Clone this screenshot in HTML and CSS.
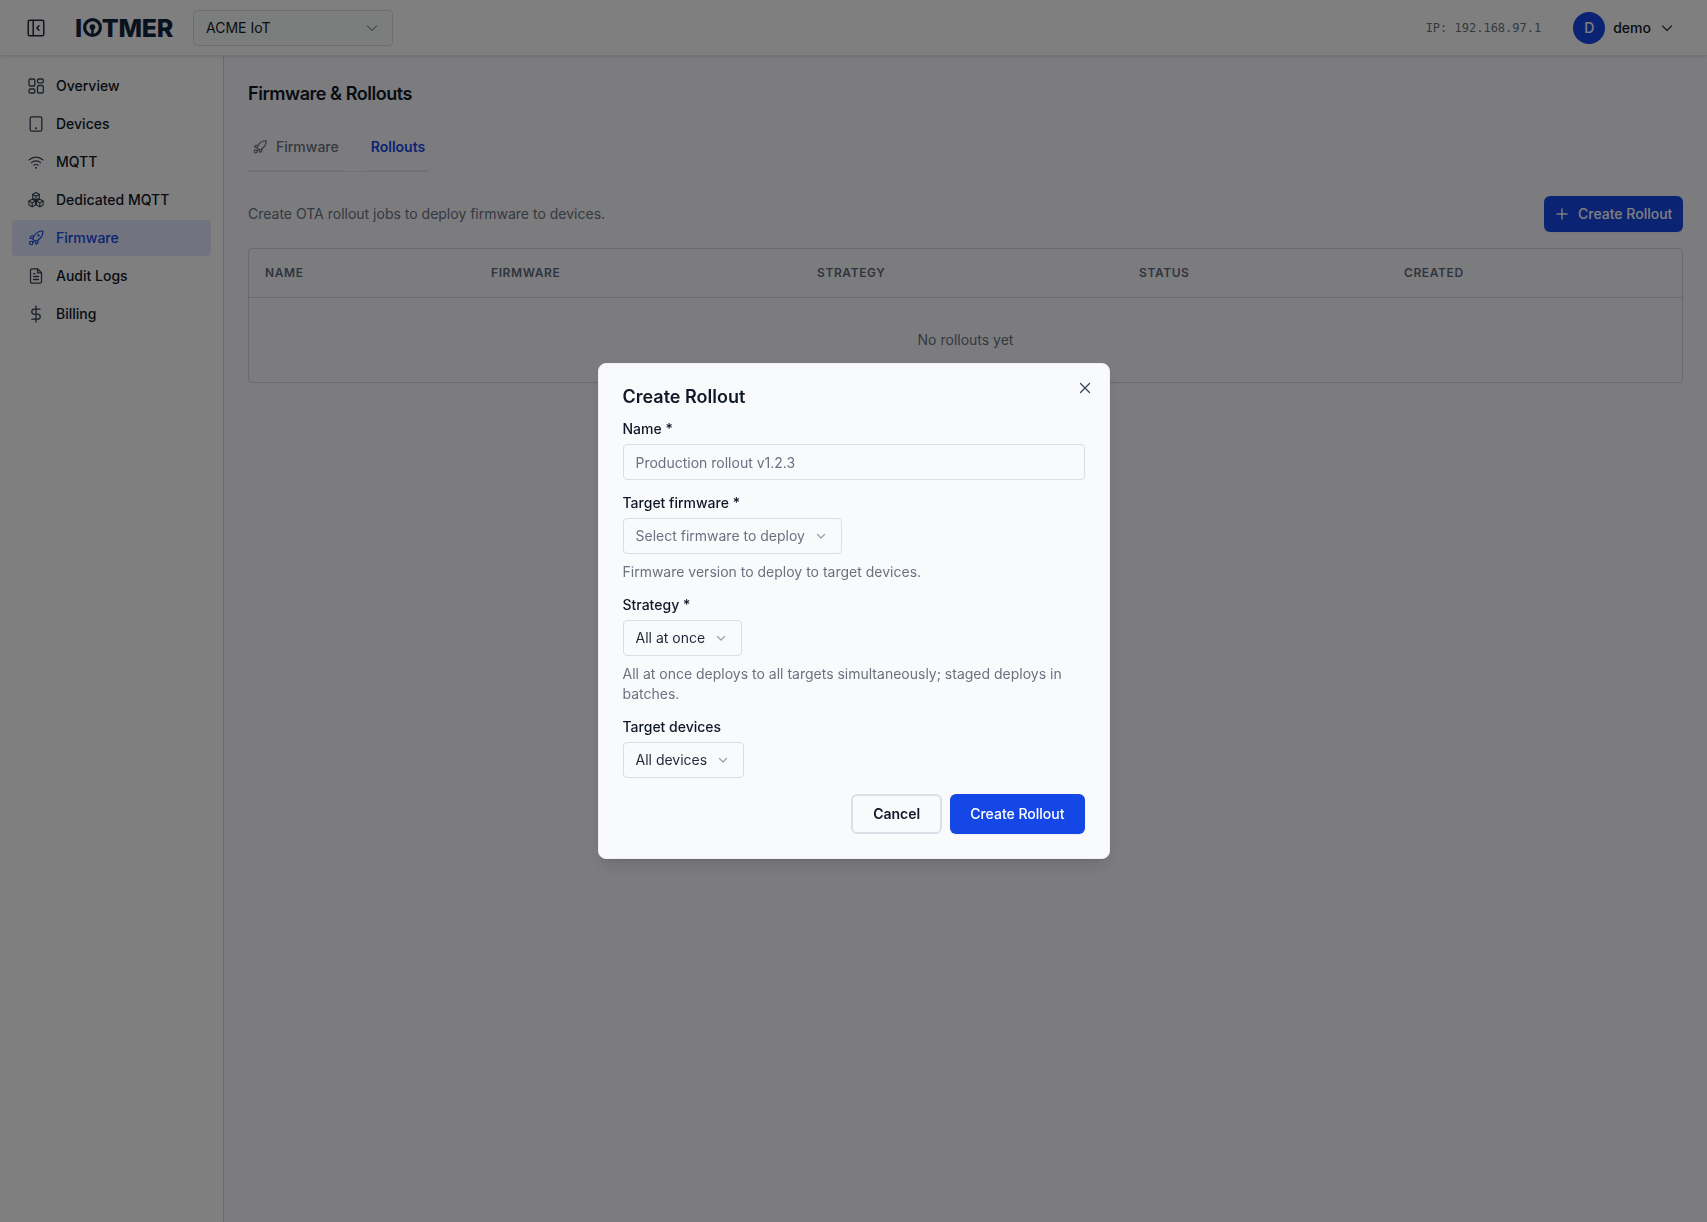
FILE: index.html
```html
<!DOCTYPE html>
<html lang="en">
<head>
<meta charset="utf-8">
<title>Firmware &amp; Rollouts</title>
<link rel="stylesheet" href="styles.css">
</head>
<body>
<div class="app">
  <header class="topbar">
    <div class="topbar-left">
      <button class="icon-btn" aria-label="Toggle sidebar">
        <svg class="ico18" viewBox="0 0 18 18" fill="none" stroke="currentColor" stroke-width="1.5" stroke-linecap="round" stroke-linejoin="round"><rect x="1.2" y="1.2" width="15.6" height="15.6" rx="1.6"/><path d="M6.2 1.2v15.600M12 6.800 9.900 9l2.100 2.200"/></svg>
      </button>
      <div class="logo"><span>I</span><svg class="logo-o" viewBox="0 0 20 20"><path fill-rule="evenodd" d="M10 0a10 10 0 1 0 0 20 10 10 0 0 0 0-20zm0 3.400a6.600 6.600 0 1 1 0 13.200 6.600 6.600 0 0 1 0-13.200z"/><circle cx="10" cy="9.500" r="3"/><rect x="8.700" y="9.500" width="2.600" height="8"/></svg><span>TMER</span></div>
      <div class="org-select"><span>ACME IoT</span><svg class="chev chev-muted" viewBox="0 0 16 16"><path d="M3.500 6l4.500 4.500L12.500 6"/></svg></div>
    </div>
    <div class="topbar-right">
      <span class="ip">IP: 192.168.97.1</span>
      <div class="user">
        <span class="avatar">D</span>
        <span class="user-name">demo</span>
        <svg class="chev chev-dark" viewBox="0 0 16 16"><path d="M3.500 6l4.500 4.500L12.500 6"/></svg>
      </div>
    </div>
  </header>

  <div class="body-row">
    <nav class="sidebar">
      <a class="nav-item">
        <svg class="nav-ico" viewBox="0 0 18 18"><rect x="2" y="2" width="5.800" height="7" rx="1.200"/><rect x="10.500" y="2" width="5.800" height="3.800" rx="1.200"/><rect x="2" y="12" width="5.800" height="4" rx="1.200"/><rect x="10.500" y="8.500" width="5.800" height="7.500" rx="1.200"/></svg>
        <span>Overview</span>
      </a>
      <a class="nav-item">
        <svg class="nav-ico" viewBox="0 0 18 18"><rect x="3.200" y="1.800" width="11.600" height="14.400" rx="1.500"/><circle cx="9" cy="13.300" r=".4"/></svg>
        <span>Devices</span>
      </a>
      <a class="nav-item">
        <svg class="nav-ico thin" viewBox="0 0 18 18"><path d="M2 7c4-3.800 10-3.800 14 0M4.400 9.700c2.600-2.500 6.600-2.500 9.200 0M6.700 12.300c1.300-1.200 3.300-1.200 4.600 0"/><circle cx="9" cy="14.700" r=".4"/></svg>
        <span>MQTT</span>
      </a>
      <a class="nav-item">
        <svg class="nav-ico thin" viewBox="0 0 18 18"><path d="M9 1.500l3.300 1.900v3.800L9 9.100 5.700 7.200V3.400zM5.200 8.200l3.300 1.900v3.800l-3.300 1.900-3.300-1.900v-3.800zM12.800 8.200l3.300 1.900v3.800l-3.300 1.900-3.300-1.900v-3.800z"/><path d="M5.700 3.400 9 5.300l3.300-1.900M9 5.300v3.800M1.900 10.100l3.300 1.900 3.300-1.900M5.200 12v3.800M9.500 10.100l3.300 1.900 3.300-1.900M12.800 12v3.800"/></svg>
        <span>Dedicated MQTT</span>
      </a>
      <a class="nav-item active">
        <svg class="nav-ico thin" viewBox="0 0 18 18"><path d="M16 2c-4.300 0-7.300 2-9.200 5.300L5.700 10l2.300 2.300 2.700-1.100C14 9.300 16 6.300 16 2z"/><path d="M7 7H4.200L2.800 9l3 .7M11 11v2.800l-2 1.400-.7-3"/><circle cx="4.200" cy="14" r="1.700"/><path d="M6.800 12.500l-1.300 1"/><circle cx="11.500" cy="6.500" r=".6"/></svg>
        <span>Firmware</span>
      </a>
      <a class="nav-item">
        <svg class="nav-ico" viewBox="0 0 18 18"><path d="M10.500 1.800H5a1.500 1.500 0 0 0-1.500 1.500v11.400A1.500 1.500 0 0 0 5 16.200h8a1.500 1.500 0 0 0 1.500-1.500V5.800zM10.500 1.800v4h4M6.500 9.500h5M6.500 12.500h5M6.500 6.700h1.500"/></svg>
        <span>Audit Logs</span>
      </a>
      <a class="nav-item">
        <svg class="nav-ico" viewBox="0 0 18 18"><path d="M9 1v16M13 4.200H7.300a2.500 2.500 0 0 0 0 5h3.400a2.500 2.500 0 0 1 0 5H4.800"/></svg>
        <span>Billing</span>
      </a>
    </nav>

    <main class="content">
      <h1 class="page-title">Firmware &amp; Rollouts</h1>
      <div class="tabs">
        <div class="tab">
          <svg class="tab-ico" viewBox="0 0 18 18"><path d="M16 2c-4.300 0-7.300 2-9.200 5.300L5.700 10l2.300 2.300 2.700-1.100C14 9.300 16 6.300 16 2z"/><path d="M7 7H4.200L2.800 9l3 .7M11 11v2.800l-2 1.400-.7-3"/><circle cx="4.200" cy="14" r="1.700"/><path d="M6.800 12.500l-1.300 1"/></svg>
          <span>Firmware</span>
        </div>
        <div class="tab tab-active"><span>Rollouts</span></div>
      </div>
      <div class="toolbar">
        <p class="lead">Create OTA rollout jobs to deploy firmware to devices.</p>
        <button class="btn-add">
          <svg class="plus" viewBox="0 0 16 16"><path d="M8 3v10M3 8h10"/></svg>
          <span>Create Rollout</span>
        </button>
      </div>
      <div class="table-wrap">
        <table class="table">
          <thead>
            <tr>
              <th class="col-name">NAME</th>
              <th class="col-firmware">FIRMWARE</th>
              <th class="col-strategy">STRATEGY</th>
              <th class="col-status">STATUS</th>
              <th>CREATED</th>
            </tr>
          </thead>
          <tbody>
            <tr><td class="empty" colspan="5">No rollouts yet</td></tr>
          </tbody>
        </table>
      </div>
    </main>
  </div>
</div>

<div class="backdrop">
  <div class="modal" role="dialog">
    <button class="close" aria-label="Close">
      <svg viewBox="0 0 12 12"><path d="M1.500 1.500l9 9M10.500 1.500l-9 9"/></svg>
    </button>
    <h2 class="modal-title">Create Rollout</h2>
    <div class="field">
      <label class="label">Name *</label>
      <div class="input placeholder">Production rollout v1.2.3</div>
    </div>
    <div class="field">
      <label class="label">Target firmware *</label>
      <div class="select placeholder"><span>Select firmware to deploy</span><svg class="chev chev-muted" viewBox="0 0 16 16"><path d="M4.500 6.500 8 10l3.500-3.500"/></svg></div>
      <p class="help">Firmware version to deploy to target devices.</p>
    </div>
    <div class="field">
      <label class="label">Strategy *</label>
      <div class="select"><span>All at once</span><svg class="chev chev-muted" viewBox="0 0 16 16"><path d="M4.500 6.500 8 10l3.500-3.500"/></svg></div>
      <p class="help">All at once deploys to all targets simultaneously; staged deploys in batches.</p>
    </div>
    <div class="field">
      <label class="label">Target devices</label>
      <div class="select"><span>All devices</span><svg class="chev chev-muted" viewBox="0 0 16 16"><path d="M4.500 6.500 8 10l3.500-3.500"/></svg></div>
    </div>
    <div class="actions">
      <button class="btn btn-cancel">Cancel</button>
      <button class="btn btn-primary">Create Rollout</button>
    </div>
  </div>
</div>
</body>
</html>
```
FILE: styles.css
```css
* { box-sizing: border-box; }
html, body { margin: 0; height: 100%; }
body {
  font-family: Inter, "Noto Sans", sans-serif;
  font-size: 14px;
  line-height: 20px;
  color: #101828;
  background: #f8f9fc;
  overflow: hidden;
}
button { font: inherit; cursor: pointer; }

.app { display: flex; flex-direction: column; height: 1222px; }

.topbar {
  height: 56px;
  flex: none;
  display: flex;
  align-items: center;
  justify-content: space-between;
  background: #fff;
  border-bottom: 1px solid #e5e7eb;
  box-shadow: 0 1px 3px rgba(0, 0, 0, .1);
  padding: 0 32px 0 27px;
  position: relative;
}
.topbar-left { display: flex; align-items: center; }
.icon-btn {
  border: 0;
  padding: 0;
  background: none;
  color: #1e2939;
  display: flex;
  margin-right: 30px;
}
.ico18 { width: 18px; height: 18px; }

.logo {
  display: flex;
  align-items: center;
  width: 118px;
  font-size: 25px;
  line-height: 28px;
  font-weight: 800;
  letter-spacing: -.3px;
  color: #10243c;
}
.logo-o { width: 19px; height: 19px; margin: 0 0 0 1px; fill: #10243c; flex: none; }

.org-select {
  width: 200px;
  height: 36px;
  display: flex;
  align-items: center;
  justify-content: space-between;
  padding: 0 12px;
  background: #f9fafb;
  border: 1px solid #d8dbe4;
  border-radius: 4px;
  color: #101828;
}
.chev { width: 16px; height: 16px; fill: none; stroke-width: 1.3; stroke-linecap: round; stroke-linejoin: round; flex: none; }
.chev-muted { stroke: #99a1af; }
.chev-dark { stroke: #364153; }

.topbar-right { display: flex; align-items: center; gap: 32px; }
.ip { font-family: "DejaVu Sans Mono", monospace; font-size: 12px; color: #6a7282; }
.user { display: flex; align-items: center; gap: 8px; }
.avatar {
  width: 32px;
  height: 32px;
  border-radius: 50%;
  background: #1447e6;
  color: #fff;
  font-weight: 500;
  display: flex;
  align-items: center;
  justify-content: center;
}
.user-name { font-weight: 500; }

.body-row { flex: 1; display: flex; min-height: 0; }

.sidebar {
  width: 224px;
  flex: none;
  background: #fff;
  border-right: 1px solid #d1d5dc;
  padding: 12px 12px;
  display: flex;
  flex-direction: column;
  gap: 2px;
}
.nav-item {
  height: 36px;
  display: flex;
  align-items: center;
  gap: 11px;
  padding: 0 13px 0 15px;
  border-radius: 4px;
  color: #101828;
  font-weight: 500;
}
.nav-ico {
  width: 18px;
  height: 18px;
  fill: none;
  stroke: #364153;
  stroke-width: 1.3;
  stroke-linecap: round;
  stroke-linejoin: round;
  flex: none;
}
.nav-ico.thin { stroke-width: 1.1; }
.nav-item.active { background: #e2e9fe; color: #1447e6; }
.nav-item.active .nav-ico { stroke: #1447e6; }

.content { flex: 1; min-width: 0; padding: 24px; }
.page-title { margin: 0; font-size: 18px; line-height: 28px; font-weight: 600; letter-spacing: -.45px; color: #101828; }

.tabs {
  display: flex;
  width: fit-content;
  gap: 24px;
  margin-top: 20px;
  border-bottom: 1px solid #e5e7eb;
}
.tab {
  height: 44px;
  margin-bottom: -1px;
  padding: 0 5px 5px 4px;
  display: flex;
  align-items: center;
  gap: 8px;
  color: #6a7282;
  font-weight: 500;
  border-bottom: 2px solid #e5e7eb;
}
.tab-active { color: #1447e6; font-weight: 600; padding-left: 4px; padding-right: 4px; margin-left: -1px; }
.tab-ico {
  width: 16px;
  height: 16px;
  fill: none;
  stroke: #6a7282;
  stroke-width: 1.3;
  stroke-linecap: round;
  stroke-linejoin: round;
}

.toolbar {
  display: flex;
  align-items: center;
  justify-content: space-between;
  margin-top: 24px;
}
.lead { margin: 0; color: #6a7282; }
.btn-add {
  height: 36px;
  width: 139px;
  border: 0;
  border-radius: 6px;
  background: #1447e6;
  color: #fff;
  font-weight: 500;
  display: flex;
  align-items: center;
  gap: 8px;
  padding: 0 0 0 10px;
  box-shadow: 0 1px 2px rgba(0, 0, 0, .05);
}
.plus { width: 16px; height: 16px; fill: none; stroke: #fff; stroke-width: 1.4; stroke-linecap: round; }

.table-wrap {
  margin-top: 16px;
  border: 1px solid #d1d5dc;
  border-radius: 4px;
  overflow: hidden;
  background: #f8f9fc;
}
.table { width: 100%; border-collapse: collapse; table-layout: fixed; }
.table th {
  height: 48px;
  padding: 0 16px;
  text-align: left;
  font-size: 12px;
  line-height: 16px;
  font-weight: 600;
  letter-spacing: .6px;
  color: #5f6b7c;
  border-bottom: 1px solid #d1d5dc;
}
.col-name { width: 226px; }
.col-firmware { width: 326px; }
.col-strategy { width: 322px; }
.col-status { width: 265px; }
.empty { height: 85px; text-align: center; color: #6a7282; padding: 0; }

.backdrop {
  position: fixed;
  inset: 0;
  background: rgba(0, 0, 0, .5);
  display: flex;
  align-items: center;
  justify-content: center;
}
.modal {
  position: relative;
  width: 512px;
  background: #f9fafb;
  border: 1px solid #eef0f4;
  border-radius: 8px;
  padding: 19px 24px 24px;
  box-shadow: 0 10px 15px -3px rgba(0, 0, 0, .1), 0 4px 6px -4px rgba(0, 0, 0, .1);
}
.close {
  position: absolute;
  top: 16px;
  right: 16px;
  width: 16px;
  height: 16px;
  padding: 2px;
  border: 0;
  background: none;
  display: flex;
}
.close svg { width: 12px; height: 12px; fill: none; stroke: #364153; stroke-width: 1.2; stroke-linecap: round; }
.modal-title { margin: 0 0 7px; font-size: 18px; line-height: 28px; font-weight: 600; color: #101828; }
.field { margin-top: 12px; display: flex; flex-direction: column; align-items: flex-start; }
.modal-title + .field { margin-top: 0; }
.label { line-height: 22px; font-weight: 500; color: #101828; margin-bottom: 4px; }
.input, .select {
  height: 36px;
  display: flex;
  align-items: center;
  padding: 0 12px;
  background: #f9fafb;
  border: 1px solid #dadde6;
  border-radius: 4px;
  color: #1e2939;
}
.input { width: 100%; padding-top: 2px; }
.select { gap: 8px; padding-right: 12px; }
.placeholder { color: #6a7282; }
.help { margin: 8px 0 0; color: #6a7282; }
.actions { display: flex; justify-content: flex-end; gap: 8px; margin-top: 16px; }
.btn {
  height: 40px;
  border-radius: 6px;
  font-weight: 600;
  padding: 0 18px;
  border: 2px solid transparent;
}
.btn-cancel { background: #f9fafb; border-color: #dbe0e8; color: #101828; padding: 0 20px; }
.btn-primary { background: #1447e6; color: #fff; font-weight: 500; padding: 0 18px; box-shadow: 0 1px 2px rgba(0, 0, 0, .05); }
```
